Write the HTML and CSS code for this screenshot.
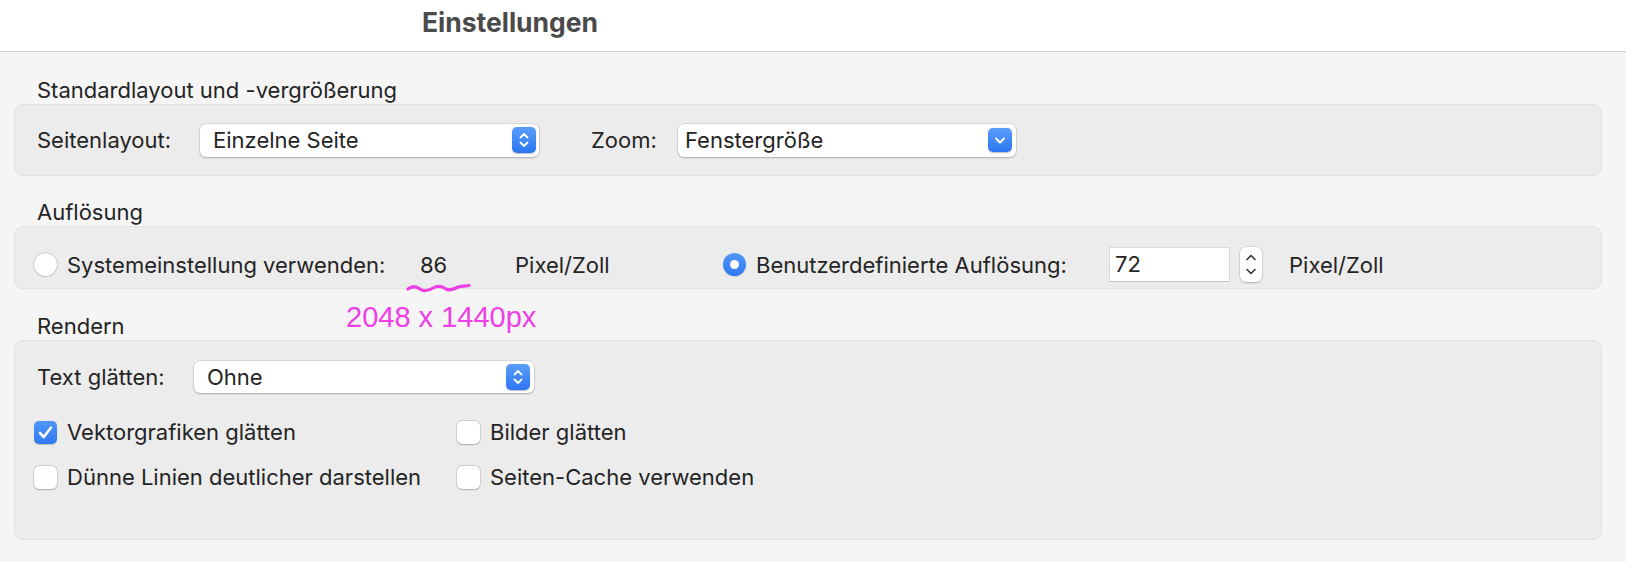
FILE: index.html
```html
<!DOCTYPE html>
<html lang="de">
<head>
<meta charset="utf-8">
<title>Einstellungen</title>
<link rel="stylesheet" href="styles.css">
</head>
<body>
<header class="titlebar"><h1 class="title">Einstellungen</h1></header>
<main class="content">
  <section class="section sec-first">
    <h2 class="section-title">Standardlayout und -vergrößerung</h2>
    <div class="panel panel-layout">
      <span class="label lbl-seitenlayout">Seitenlayout:</span>
      <div class="select sel-layout">
        <span class="select-value">Einzelne Seite</span>
        <span class="select-btn btn-updown"><svg width="24" height="26" viewBox="0 0 24 26"><path d="M8.5 10.5 L12 7 L15.5 10.5 M8.5 15.5 L12 19 L15.5 15.5" fill="none" stroke="#fff" stroke-width="1.8" stroke-linecap="round" stroke-linejoin="round"/></svg></span>
      </div>
      <span class="label lbl-zoom">Zoom:</span>
      <div class="select sel-zoom">
        <span class="select-value">Fenstergröße</span>
        <span class="select-btn btn-down"><svg width="24" height="24" viewBox="0 0 24 24"><path d="M8 10.5 L12 14.5 L16 10.5" fill="none" stroke="#fff" stroke-width="1.9" stroke-linecap="round" stroke-linejoin="round"/></svg></span>
      </div>
    </div>
  </section>

  <section class="section">
    <h2 class="section-title">Auflösung</h2>
    <div class="panel panel-res">
      <label class="option opt-sys"><span class="radio"></span><span class="label">Systemeinstellung verwenden:</span></label>
      <span class="label val-sys">86</span>
      <span class="label unit-sys">Pixel/Zoll</span>
      <label class="option opt-custom"><span class="radio radio-on"><span class="radio-dot"></span></span><span class="label">Benutzerdefinierte Auflösung:</span></label>
      <span class="num-input">72</span>
      <span class="stepper"><svg width="22" height="35" viewBox="0 0 22 35"><path d="M7 12.5 L11 8.5 L15 12.5 M7 22.5 L11 26.5 L15 22.5" fill="none" stroke="#333" stroke-width="1.6" stroke-linecap="round" stroke-linejoin="round"/></svg></span>
      <span class="label unit-custom">Pixel/Zoll</span>
    </div>
  </section>

  <section class="section sec-render">
    <h2 class="section-title">Rendern</h2>
    <div class="panel panel-render">
      <div class="render-row">
        <span class="label lbl-text">Text glätten:</span>
        <div class="select sel-text">
          <span class="select-value">Ohne</span>
          <span class="select-btn btn-updown"><svg width="24" height="26" viewBox="0 0 24 26"><path d="M8.5 10.5 L12 7 L15.5 10.5 M8.5 15.5 L12 19 L15.5 15.5" fill="none" stroke="#fff" stroke-width="1.8" stroke-linecap="round" stroke-linejoin="round"/></svg></span>
        </div>
      </div>
      <div class="checks">
        <label class="option"><span class="checkbox checkbox-on"><svg width="23" height="23" viewBox="0 0 23 23"><path d="M6 12 L9.8 16 L17 6.5" fill="none" stroke="#fff" stroke-width="2.6" stroke-linecap="round" stroke-linejoin="round"/></svg></span><span class="label">Vektorgrafiken glätten</span></label>
        <label class="option"><span class="checkbox"></span><span class="label">Bilder glätten</span></label>
        <label class="option"><span class="checkbox"></span><span class="label">Dünne Linien deutlicher darstellen</span></label>
        <label class="option"><span class="checkbox"></span><span class="label">Seiten-Cache verwenden</span></label>
      </div>
    </div>
  </section>
</main>

<svg class="squiggle" width="66" height="14" viewBox="0 0 66 14"><path d="M2 8 C6 5, 10 5, 14 8 C18 11, 22 10, 27 7 C32 4, 36 5, 40 8 C44 10, 48 8, 52 6 C55 5, 58 5, 63 4.5" fill="none" stroke="#ee3ee6" stroke-width="3.2" stroke-linecap="round"/></svg>
<span class="annotation">2048 x 1440px</span>
</body>
</html>
```

FILE: styles.css
```css
* { box-sizing: border-box; }

html, body {
  margin: 0;
  padding: 0;
}

body {
  position: relative;
  width: 1626px;
  height: 562px;
  overflow: hidden;
  background: #f5f5f5;
  font-family: Inter, "Noto Sans", "DejaVu Sans", sans-serif;
  font-size: 22px;
  color: #242424;
}

.titlebar {
  height: 52px;
  background: #ffffff;
  border-bottom: 1px solid #d3d3d3;
}

.title {
  margin: 0;
  width: 1020px;
  text-align: center;
  font-size: 26.5px;
  font-weight: 700;
  line-height: 45px;
  color: #4a4a4a;
}

.content {
  padding: 0 24px 0 14px;
}

.section {
  margin-top: 24px;
}

.sec-first { margin-top: 26px; }
.sec-render { margin-top: 25px; }

.section-title {
  margin: 0 0 2px 23px;
  font-size: 22px;
  font-weight: 400;
  line-height: 24px;
  height: 24px;
}

.panel {
  background: #ececec;
  border: 1px solid #e2e2e2;
  border-radius: 9px;
  display: flex;
}

.label {
  white-space: nowrap;
  line-height: 24px;
}

/* Panel 1 */
.panel-layout {
  height: 72px;
  align-items: center;
  padding-left: 22px;
}

.lbl-seitenlayout { width: 163px; }
.lbl-zoom { width: 87px; margin-left: 52px; }

.select {
  position: relative;
  display: flex;
  align-items: center;
  justify-content: space-between;
  background: #ffffff;
  border-radius: 6px;
  box-shadow: 0 0 0 0.5px rgba(0, 0, 0, 0.14), 0 1px 2px rgba(0, 0, 0, 0.22);
  padding: 0 3px 0 13px;
}

.sel-layout { width: 339px; height: 33px; }
.sel-zoom { width: 338px; height: 33px; padding-left: 7px; padding-right: 4px; }

.select-value { line-height: 24px; }

.select-btn {
  display: flex;
  border-radius: 5px;
  background: linear-gradient(#5a9ef9, #2c76f3);
  box-shadow: 0 0.5px 1px rgba(0, 0, 0, 0.25);
}

.btn-updown { width: 24px; height: 26px; }
.btn-down { width: 24px; height: 24px; }

/* Panel 2 */
.panel-res {
  height: 63px;
  padding-top: 20px;
  padding-left: 19px;
  align-items: flex-start;
}

.option {
  display: flex;
  align-items: center;
  gap: 10px;
}

.panel-res .option,
.panel-res > .label {
  height: 35px;
}

.panel-res > .label { display: flex; align-items: center; }

.opt-sys { width: 386px; }
.val-sys { width: 95px; }
.unit-sys { width: 208px; }
.opt-custom { width: 386px; }

.radio {
  flex: none;
  width: 23px;
  height: 23px;
  border-radius: 50%;
  background: #ffffff;
  box-shadow: 0 0 0 0.5px rgba(0, 0, 0, 0.2), 0 0.5px 1.5px rgba(0, 0, 0, 0.2);
  display: flex;
  align-items: center;
  justify-content: center;
}

.radio-on {
  background: linear-gradient(#4f95f8, #2f79f3);
  box-shadow: 0 0.5px 1px rgba(0, 0, 0, 0.2);
}

.radio-dot {
  width: 9px;
  height: 9px;
  border-radius: 50%;
  background: #ffffff;
}

.num-input {
  width: 121px;
  height: 35px;
  background: #ffffff;
  border: 1px solid #dadada;
  border-bottom-color: #c4c4c4;
  padding-left: 5px;
  line-height: 33px;
}

.stepper {
  display: flex;
  width: 22px;
  height: 35px;
  margin-left: 10px;
  margin-right: 27px;
  background: #ffffff;
  border-radius: 6px;
  box-shadow: 0 0 0 0.5px rgba(0, 0, 0, 0.14), 0 1px 2px rgba(0, 0, 0, 0.2);
}

/* Panel 3 */
.panel-render {
  height: 200px;
  flex-direction: column;
  padding-top: 20px;
  padding-left: 22px;
}

.render-row {
  display: flex;
  align-items: center;
}

.lbl-text { width: 157px; }
.sel-text { width: 340px; height: 32px; padding-right: 4px; }

.checks {
  margin-top: 27px;
  margin-left: -3px;
  display: grid;
  grid-template-columns: 423px auto;
  row-gap: 21px;
}

.checkbox {
  flex: none;
  width: 23px;
  height: 23px;
  border-radius: 5px;
  background: #ffffff;
  box-shadow: 0 0 0 0.5px rgba(0, 0, 0, 0.2), 0 0.5px 1.5px rgba(0, 0, 0, 0.18);
  display: flex;
}

.checkbox-on {
  background: linear-gradient(#4f95f8, #2f79f3);
  box-shadow: 0 0.5px 1px rgba(0, 0, 0, 0.2);
}

/* Annotation overlay */
.squiggle {
  position: absolute;
  left: 406px;
  top: 281px;
}

.annotation {
  position: absolute;
  left: 346px;
  top: 303px;
  font-family: "Liberation Sans", Arial, sans-serif;
  font-size: 29px;
  line-height: 28px;
  color: #ee3ee6;
  white-space: nowrap;
}
```
